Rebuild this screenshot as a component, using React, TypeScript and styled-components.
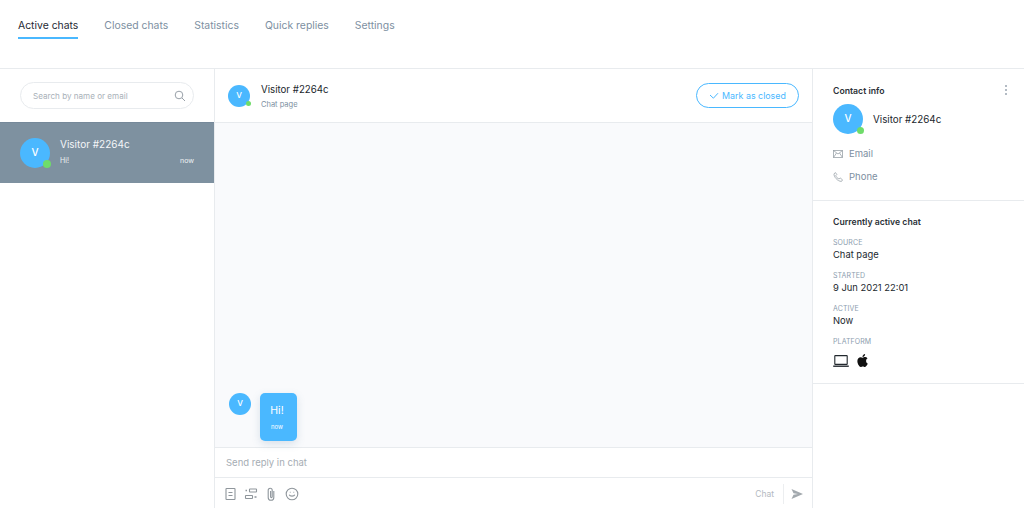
import React from "react";
import styled, { createGlobalStyle } from "styled-components";

const Global = createGlobalStyle`
  html, body { margin: 0; padding: 0; background: #fff; }
  body { font-family: Inter, "Liberation Sans", sans-serif; }
  #root { width: 1024px; height: 508px; overflow: hidden; }
  * { box-sizing: border-box; }
`;

const Page = styled.div`
  width: 1024px;
  height: 508px;
  display: flex;
  flex-direction: column;
  overflow: hidden;
`;
const TopBar = styled.nav`
  height: 69px;
  flex: none;
  display: flex;
  align-items: flex-start;
  gap: 26px;
  padding: 18px 18px 0;
  border-bottom: 1px solid #e8ebee;
`;
const Tab = styled.div<{ $active?: boolean }>`
  height: 21px;
  font-size: 10.4px;
  line-height: 15px;
  color: ${(p) => (p.$active ? "#1f2933" : "#7d8fa1")};
  border-bottom: ${(p) => (p.$active ? "2px solid #4ab8ff" : "none")};
`;
const Columns = styled.div`
  flex: 1;
  display: flex;
  min-height: 0;
`;
const LeftCol = styled.aside`
  width: 215px;
  flex: none;
  border-right: 1px solid #e8ebee;
`;
const SearchWrap = styled.div`
  height: 53px;
  padding: 13px 20px 0;
`;
const SearchBox = styled.div`
  width: 174px;
  height: 27px;
  border: 1px solid #e8ebee;
  border-radius: 14px;
  display: flex;
  align-items: center;
  justify-content: space-between;
  padding: 1px 7px 0 12px;
  font-size: 8.1px;
  color: #a9b1b9;
`;
const ConvRow = styled.div`
  height: 61px;
  width: 214px;
  background: #7e91a0;
  display: flex;
  align-items: center;
  padding: 0 20px;
  gap: 10px;
  color: #fff;
  border-top: 1px solid #76899a;
`;
const AvatarCircle = styled.div<{ $size: number; $font: number }>`
  position: relative;
  width: ${(p) => p.$size}px;
  height: ${(p) => p.$size}px;
  flex: none;
  border-radius: 50%;
  background: #4ab8ff;
  color: #fff;
  font-size: ${(p) => p.$font}px;
  font-weight: 500;
  display: flex;
  align-items: center;
  justify-content: center;
  padding-bottom: 2px;
`;
const StatusDot = styled.span<{ $size: number }>`
  position: absolute;
  right: -1px;
  bottom: ${(p) => (p.$size > 5 ? 0 : 1)}px;
  width: ${(p) => p.$size}px;
  height: ${(p) => p.$size}px;
  border-radius: 50%;
  background: #6fdc6a;
`;
const ConvBody = styled.div`
  flex: 1;
  display: flex;
  flex-direction: column;
  gap: 5px;
  padding-bottom: 2px;
`;
const ConvName = styled.div`
  font-size: 10px;
  line-height: 13px;
  color: #f4f6f8;
`;
const ConvMeta = styled.div`
  display: flex;
  justify-content: space-between;
  align-items: flex-end;
  font-size: 7px;
  line-height: 10px;
  color: #eef1f4;
`;
const Center = styled.main`
  width: 598px;
  flex: none;
  display: flex;
  flex-direction: column;
  border-right: 1px solid #e8ebee;
`;
const ChatHead = styled.header`
  height: 54px;
  flex: none;
  display: flex;
  align-items: center;
  padding: 0 13px;
  border-bottom: 1px solid #e8ebee;
`;
const ChatHeadText = styled.div`
  flex: 1;
  margin-left: 11px;
  padding-top: 2px;
  display: flex;
  flex-direction: column;
  gap: 4px;
`;
const ChatTitle = styled.div`
  font-size: 9.7px;
  line-height: 13px;
  color: #22282e;
`;
const ChatSub = styled.div`
  font-size: 7.5px;
  line-height: 10px;
  color: #7d8fa1;
`;
const CloseButton = styled.button`
  width: 103px;
  height: 25px;
  padding: 0;
  border: 1px solid #4ab8ff;
  border-radius: 13px;
  background: #fff;
  color: #4ab8ff;
  font: 400 8.9px Inter, sans-serif;
  display: flex;
  align-items: center;
  justify-content: center;
  gap: 3px;
`;
const Messages = styled.div`
  flex: 1;
  background: #f9fafc;
  border-bottom: 1px solid #e8ebee;
  display: flex;
  align-items: flex-start;
  gap: 9px;
  padding: 270px 14px 0;
`;
const Bubble = styled.div`
  width: 37px;
  height: 48px;
  border-radius: 5px;
  background: #4ab8ff;
  color: #fff;
  box-shadow: 0 3px 8px rgba(70, 110, 150, 0.18);
  display: flex;
  flex-direction: column;
  align-items: center;
  padding: 11px 3px 0 0;
`;
const BubbleText = styled.div`
  font-size: 10.5px;
  line-height: 14px;
`;
const BubbleTime = styled.div`
  margin-top: 5px;
  font-size: 6px;
  line-height: 8px;
`;
const ReplyRow = styled.div`
  height: 30px;
  flex: none;
  display: flex;
  align-items: center;
  padding: 0 11px;
  font-size: 9.5px;
  color: #a6adb4;
  border-bottom: 1px solid #e8ebee;
`;
const ToolRow = styled.div`
  height: 30px;
  flex: none;
  display: flex;
  align-items: center;
  gap: 7px;
  padding: 2px 9px 0 9px;
`;
const ToolIcons = styled.div`
  flex: 1;
  display: flex;
  align-items: center;
  gap: 6.5px;
`;
const ChatLabel = styled.div`
  font-size: 8.5px;
  color: #b3b9bf;
  padding-right: 9px;
  line-height: 20px;
  border-right: 1px solid #eceef0;
`;
const RightCol = styled.aside`
  flex: 1;
`;
const ContactCard = styled.section`
  height: 132px;
  padding: 15px 17px 0 20px;
  border-bottom: 1px solid #e8ebee;
`;
const CardHead = styled.div`
  display: flex;
  justify-content: space-between;
  align-items: center;
  height: 12px;
`;
const CardTitle = styled.h3`
  margin: 0;
  padding-top: 1px;
  font-size: 8.7px;
  line-height: 12px;
  font-weight: 600;
  color: #2c3238;
`;
const ContactMain = styled.div`
  display: flex;
  align-items: center;
  gap: 10px;
  margin-top: 8px;
`;
const ContactName = styled.div`
  font-size: 9.8px;
  color: #22282e;
`;
const ContactLine = styled.div<{ $top: number }>`
  display: flex;
  align-items: center;
  gap: 6px;
  margin-top: ${(p) => p.$top}px;
  font-size: 9.5px;
  line-height: 12px;
  color: #7d8fa1;
`;
const ActiveCard = styled.section`
  height: 183px;
  padding: 14px 14px 0 20px;
  border-bottom: 1px solid #e8ebee;
`;
const FieldLabel = styled.div<{ $top: number }>`
  margin-top: ${(p) => p.$top}px;
  font-size: 7px;
  line-height: 9px;
  letter-spacing: 0.1px;
  color: #8c9dae;
`;
const FieldValue = styled.div`
  margin-top: 2px;
  font-size: 9.4px;
  line-height: 12px;
  color: #22282e;
`;
const PlatformIcons = styled.div`
  display: flex;
  align-items: center;
  gap: 8px;
  margin-top: 8px;
`;
const Dots = styled.div`
  display: flex;
  flex-direction: column;
  gap: 2px;
`;
const Dot = styled.span`
  width: 2px;
  height: 2px;
  border-radius: 50%;
  background: #9aa5b0;
`;

type AvatarProps = { size: number; font: number; dot?: number };
const Avatar = ({ size, font, dot }: AvatarProps) => (
  <AvatarCircle $size={size} $font={font}>
    V
    {dot ? <StatusDot $size={dot} /> : null}
  </AvatarCircle>
);

const stroke = { fill: "none", stroke: "#8f969c", strokeWidth: 1.1 } as const;

export default function App() {
  return (
    <Page>
      <Global />
      <TopBar>
        <Tab $active>Active chats</Tab>
        <Tab>Closed chats</Tab>
        <Tab>Statistics</Tab>
        <Tab>Quick replies</Tab>
        <Tab>Settings</Tab>
      </TopBar>
      <Columns>
        <LeftCol>
          <SearchWrap>
            <SearchBox>
              <span>Search by name or email</span>
              <svg width="12" height="12" viewBox="0 0 12 12" fill="none" stroke="#98a0a8" strokeWidth="1">
                <circle cx="5" cy="5" r="3.8" />
                <path d="M8 8l3 3" />
              </svg>
            </SearchBox>
          </SearchWrap>
          <ConvRow>
            <Avatar size={30} font={10} dot={8} />
            <ConvBody>
              <ConvName>Visitor #2264c</ConvName>
              <ConvMeta>
                <span>Hi!</span>
                <span>now</span>
              </ConvMeta>
            </ConvBody>
          </ConvRow>
        </LeftCol>
        <Center>
          <ChatHead>
            <Avatar size={22} font={8} dot={5} />
            <ChatHeadText>
              <ChatTitle>Visitor #2264c</ChatTitle>
              <ChatSub>Chat page</ChatSub>
            </ChatHeadText>
            <CloseButton>
              <svg width="10" height="8" viewBox="0 0 10 8" fill="none" stroke="#4ab8ff" strokeWidth="1">
                <path d="M1 3l3.4 3.2L9 1.2" />
              </svg>
              Mark as closed
            </CloseButton>
          </ChatHead>
          <Messages>
            <Avatar size={22} font={8} />
            <Bubble>
              <BubbleText>Hi!</BubbleText>
              <BubbleTime>now</BubbleTime>
            </Bubble>
          </Messages>
          <ReplyRow>Send reply in chat</ReplyRow>
          <ToolRow>
            <ToolIcons>
              <svg width="13" height="14" viewBox="0 0 13 14" {...stroke}>
                <rect x="2" y="1.5" width="9" height="11" rx=".6" />
                <path d="M4.5 5.500h4M4.5 8.500h4" />
              </svg>
              <svg width="14" height="14" viewBox="0 0 14 14" {...stroke}>
                <rect x="5.500" y="2" width="7" height="3" rx=".5" />
                <rect x="1.500" y="8.500" width="7" height="3" rx=".5" />
                <path d="M1.500 3.500h1.500M10.500 10h2" strokeWidth="1.600" />
              </svg>
              <svg width="14" height="14" viewBox="0 0 14 14" {...stroke}>
                <path d="M9.800 4v6.500a2.800 2.800 0 0 1-5.600 0V3.200a2 2 0 0 1 4 0v6.600a.8.8 0 0 1-1.600 0V4" />
              </svg>
              <svg width="14" height="14" viewBox="0 0 14 14" {...stroke}>
                <circle cx="7" cy="7" r="5.800" />
                <path d="M4.200 7.800c.7 1.800 4.900 1.800 5.600 0M4.800 5.200h.8M8.400 5.200h.8" />
              </svg>
            </ToolIcons>
            <ChatLabel>Chat</ChatLabel>
            <svg width="12" height="10" viewBox="0 0 12 10" fill="#a3a9ae">
              <path d="M.5 0L12 5 .5 10l2-4.200L7 5 2.500 4.200z" />
            </svg>
          </ToolRow>
        </Center>
        <RightCol>
          <ContactCard>
            <CardHead>
              <CardTitle>Contact info</CardTitle>
              <Dots>
                <Dot />
                <Dot />
                <Dot />
              </Dots>
            </CardHead>
            <ContactMain>
              <Avatar size={30} font={10} dot={7} />
              <ContactName>Visitor #2264c</ContactName>
            </ContactMain>
            <ContactLine $top={14}>
              <svg width="10" height="8" viewBox="0 0 10 8" fill="none" stroke="#9ba3aa" strokeWidth=".8">
                <rect x=".5" y=".5" width="9" height="7" />
                <path d="M.5 .5L5 4l4.500-3.500M.5 7.500L3.500 3M9.500 7.500L6.500 3" />
              </svg>
              Email
            </ContactLine>
            <ContactLine $top={11}>
              <svg width="10" height="10" viewBox="0 0 10 10" fill="none" stroke="#9ba3aa" strokeWidth=".8">
                <path d="M2.500.6L1 1.800C.6 4.500 4.500 9.500 8.500 9.400l1-1.600-2.300-1.800-1.200 1C4.500 6.500 3 4.800 2.800 3.600l1-1z" />
              </svg>
              Phone
            </ContactLine>
          </ContactCard>
          <ActiveCard>
            <CardTitle>Currently active chat</CardTitle>
            <FieldLabel $top={10}>SOURCE</FieldLabel>
            <FieldValue>Chat page</FieldValue>
            <FieldLabel $top={10}>STARTED</FieldLabel>
            <FieldValue>9 Jun 2021 22:01</FieldValue>
            <FieldLabel $top={10}>ACTIVE</FieldLabel>
            <FieldValue>Now</FieldValue>
            <FieldLabel $top={10}>PLATFORM</FieldLabel>
            <PlatformIcons>
              <svg width="16" height="12" viewBox="0 0 16 12" fill="none" stroke="#22282e" strokeWidth="1.100">
                <rect x="1.800" y=".6" width="12.400" height="8.800" rx=".5" />
                <path d="M.2 11.200h15.600" strokeWidth="1.400" />
              </svg>
              <svg width="11" height="13" viewBox="0 0 814 1000" fill="#111">
                <path d="M788 341c-6 4-107 61-107 188 0 147 129 199 133 200-1 3-21 71-68 141-42 61-86 122-153 122s-84-39-161-39c-75 0-102 40-163 40s-104-56-153-125C59 787 12 660 12 539c0-194 126-297 250-297 66 0 121 43 162 43 40 0 102-46 177-46 29 0 131 3 187 102zM555 160c31-37 53-88 53-139 0-7-1-14-2-20-50 2-110 34-146 76-28 32-55 83-55 135 0 8 1 16 2 18 3 1 8 1 13 1 45 0 102-30 135-71z" />
              </svg>
            </PlatformIcons>
          </ActiveCard>
        </RightCol>
      </Columns>
    </Page>
  );
}
